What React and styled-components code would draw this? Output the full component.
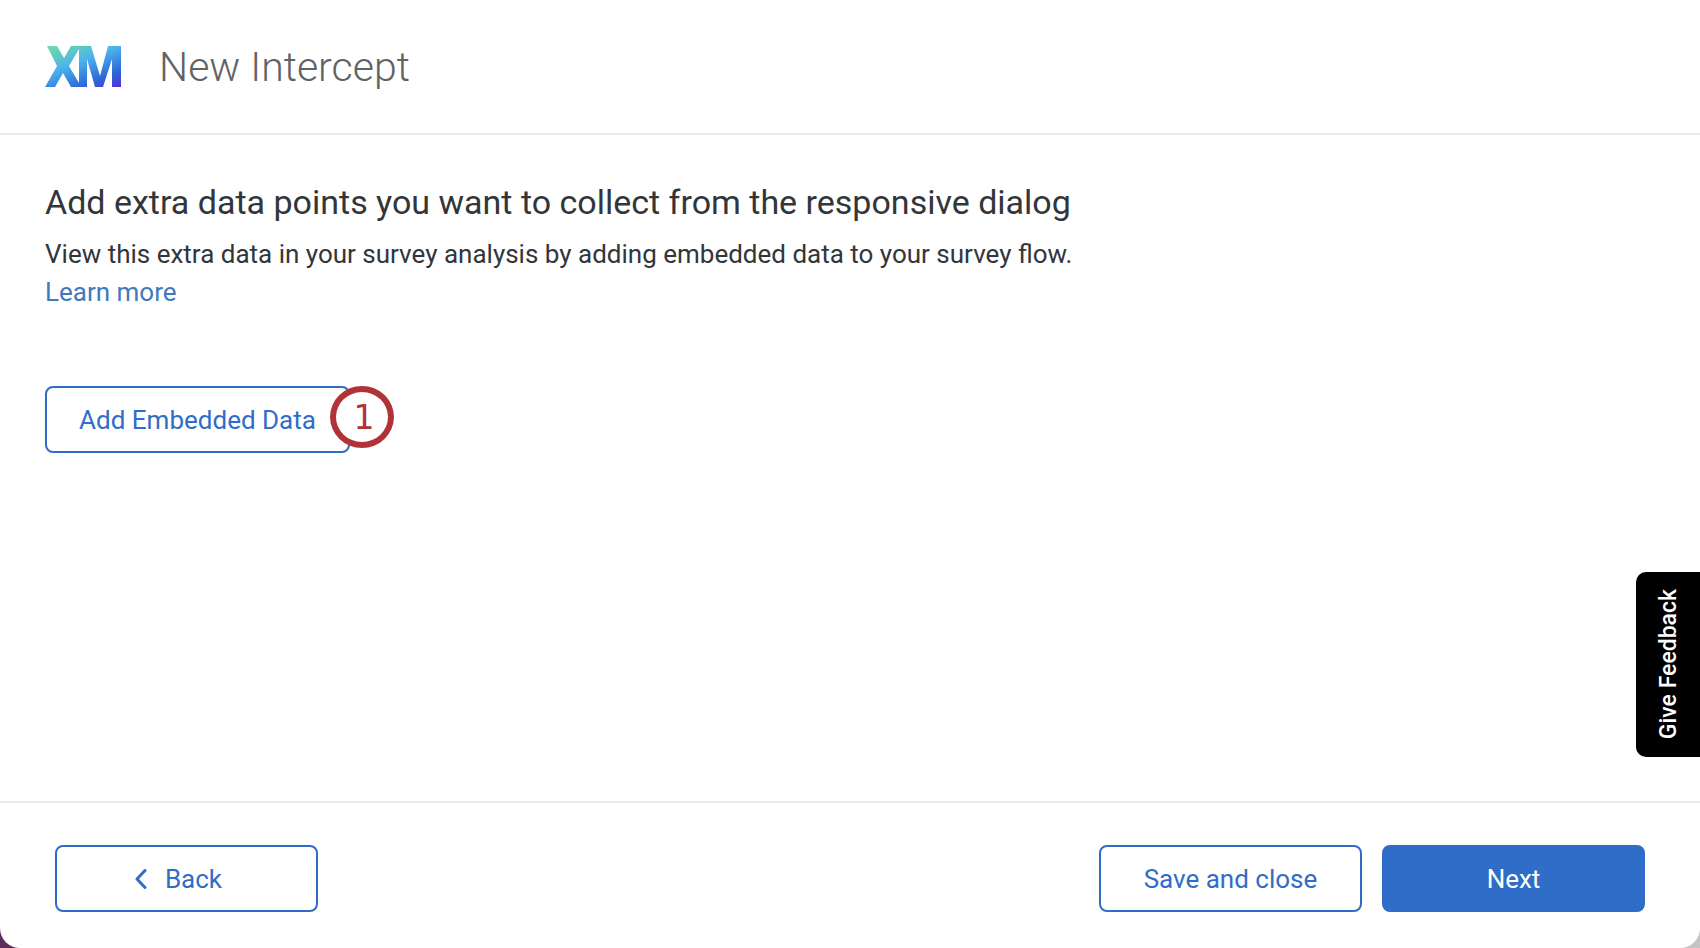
import React from 'react'
import styled, { createGlobalStyle } from 'styled-components'

const GlobalStyle = createGlobalStyle`
    *{
        box-sizing : border-box;
    }
    body{
        margin : 0;
        font-family : Roboto, "Liberation Sans", sans-serif;
        color : #32363a;
        background : linear-gradient(90deg, #5f2c5e 50%, #c4c4c4 50%);
    }
`
const Window = styled.div`
    min-height : 100vh;
    display : flex;
    flex-direction : column;
    background-color : #fff;
    border-radius : 0 0 20px 20px;
`
const Header = styled.header`
    display : flex;
    align-items : center;
    gap : 38px;
    height : 135px;
    padding : 0 45px;
    border-bottom : 2px solid #ebecec;
`
const Title = styled.h1`
    margin : 0;
    font-size : 41px;
    line-height : 48px;
    font-weight : 300;
    color : #606264;
`
const Content = styled.main`
    flex : 1;
    padding : 47px 45px;
`
const Heading = styled.h2`
    margin : 0;
    font-size : 34px;
    line-height : 40px;
    font-weight : 400;
`
const Description = styled.p`
    margin : 13px 0 0;
    font-size : 26px;
    line-height : 38px;
`
const Link = styled.a`
    display : block;
    width : fit-content;
    color : #4279bd;
    text-decoration : none;
    &:hover{
        text-decoration : underline;
    }
`
const Button = styled.button`
    display : flex;
    justify-content : center;
    align-items : center;
    gap : 18px;
    width : ${props => props.$wide ? "305px" : "263px"};
    height : 67px;
    padding : 0;
    border : 2px solid #2f6dc9;
    border-radius : 8px;
    background-color : ${props => props.$primary ? "#2f6dc9" : "#fff"};
    color : ${props => props.$primary ? "#fff" : "#2f6dc9"};
    font-family : inherit;
    font-size : 26px;
    font-weight : 400;
    cursor : pointer;
`
const BackButton = styled(Button)`
    padding-right : 16px;
`
const ButtonHolder = styled.div`
    position : relative;
    width : fit-content;
    margin-top : 75px;
`
const StepBadge = styled.span`
    position : absolute;
    top : 0;
    right : -44px;
    display : flex;
    justify-content : center;
    align-items : center;
    width : 64px;
    height : 62px;
    padding-left : 4px;
    border : 6px solid #b13338;
    border-radius : 50%;
    background-color : #fff;
    color : #b13338;
    font-family : "DejaVu Sans", sans-serif;
    font-size : 33px;
`
const Footer = styled.footer`
    display : flex;
    align-items : flex-start;
    gap : 20px;
    height : 147px;
    padding : 42px 55px 0;
    border-top : 2px solid #ebecec;
`
const Spacer = styled.div`
    flex : 1;
`
const FeedbackTab = styled.button`
    position : fixed;
    right : 0;
    bottom : 191px;
    width : 64px;
    height : 185px;
    padding : 0;
    border : 0;
    border-radius : 10px 0 0 10px;
    background-color : #000;
    color : #fff;
    font-family : inherit;
    font-size : 23px;
    font-weight : 500;
    writing-mode : sideways-lr;
    cursor : pointer;
`

const Logo = () => (
    <svg width="76" height="41" viewBox="0 0 76 41" aria-label="XM" role="img">
        <defs>
            <linearGradient id="xm" gradientUnits="userSpaceOnUse" x1="0" y1="0" x2="26" y2="66">
                <stop offset="0" stopColor="#6fe0a0" />
                <stop offset="0.38" stopColor="#4bb4ea" />
                <stop offset="0.72" stopColor="#2e66d8" />
                <stop offset="0.95" stopColor="#5a28dc" />
            </linearGradient>
        </defs>
        <path
            fill="url(#xm)"
            d="M2 0H12L19 12L26 0H46L55 30L63 0H76V41H67V13L58 41H50L42 13V41H26L18 27L10 41H0L12 20ZM34 3L24 20L34 37Z"
            fillRule="evenodd"
        />
    </svg>
)

const BackArrow = () => (
    <svg width="12" height="20" viewBox="0 0 12 20" fill="none" stroke="currentColor" strokeWidth="3" strokeLinecap="round" strokeLinejoin="round">
        <path d="M10 1.5L2 10L10 18.5" />
    </svg>
)

export default function App() {
    return (
        <>
            <GlobalStyle />
            <Window>
                <Header>
                    <Logo />
                    <Title>New Intercept</Title>
                </Header>
                <Content>
                    <Heading>Add extra data points you want to collect from the responsive dialog</Heading>
                    <Description>
                        View this extra data in your survey analysis by adding embedded data to your survey flow.
                        <Link href="#">Learn more</Link>
                    </Description>
                    <ButtonHolder>
                        <Button type="button" $wide>Add Embedded Data</Button>
                        <StepBadge>1</StepBadge>
                    </ButtonHolder>
                </Content>
                <Footer>
                    <BackButton type="button"><BackArrow />Back</BackButton>
                    <Spacer />
                    <Button type="button">Save and close</Button>
                    <Button type="button" $primary>Next</Button>
                </Footer>
                <FeedbackTab type="button">Give Feedback</FeedbackTab>
            </Window>
        </>
    )
}
